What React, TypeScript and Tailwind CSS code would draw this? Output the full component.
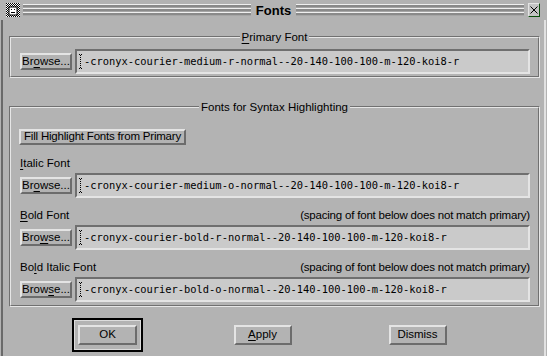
import type { ReactNode } from "react"

const ui = "font-['Liberation_Sans',Arial,sans-serif] text-[11.5px] text-black"
const raised =
  "border-2 border-t-[#e4e4e4] border-l-[#e4e4e4] border-b-[#6c6c6c] border-r-[#6c6c6c] bg-[#b3b3b3]"

function U({ children }: { children: ReactNode }) {
  return <span className="underline decoration-1 underline-offset-[2px]">{children}</span>
}

function Btn({ children, className = "" }: { children: ReactNode; className?: string }) {
  return (
    <button className={`${raised} ${ui} flex items-center justify-center leading-none whitespace-nowrap overflow-hidden ${className}`}>
      {children}
    </button>
  )
}

function Cursor() {
  return (
    <svg width="4" height="15" viewBox="0 0 4 15" className="ml-[2px] mr-[1px] shrink-0">
      <rect x="0" y="0" width="1" height="1" fill="#000" />
      <rect x="2" y="0" width="1" height="1" fill="#000" />
      {[1, 3, 5, 7, 9, 11, 13].map((y) => (
        <rect key={y} x="1" y={y} width="1" height="1" fill="#000" />
      ))}
      <rect x="0" y="14" width="1" height="1" fill="#000" />
      <rect x="2" y="14" width="1" height="1" fill="#000" />
    </svg>
  )
}

function Field({ value }: { value: string }) {
  return (
    <div className="flex-1 h-[25px] flex items-center bg-[#cacaca] border-2 border-t-[#6f6f6f] border-l-[#6f6f6f] border-b-[#e4e4e4] border-r-[#e4e4e4] overflow-hidden">
      <Cursor />
      <span className="font-['DejaVu_Sans_Mono','Liberation_Mono',monospace] text-[10.4px] whitespace-pre text-black">
        {value}
      </span>
    </div>
  )
}

function Group({ title, children, className = "" }: { title: ReactNode; children: ReactNode; className?: string }) {
  return (
    <div className={`relative ml-[6px] mr-[4px] border border-t-[#707070] border-l-[#707070] border-b-[#e6e6e6] border-r-[#e6e6e6] ${className}`}>
      <div className="border border-t-[#e6e6e6] border-l-[#e6e6e6] border-b-[#707070] border-r-[#707070] pl-[9px] pr-[8px]">
        {children}
      </div>
      <div className="absolute -top-[7px] left-0 right-0 flex justify-center">
        <span className={`${ui} bg-[#b3b3b3] px-[2px] leading-[14px]`}>{title}</span>
      </div>
    </div>
  )
}

function FontRow({ browse, value }: { browse: ReactNode; value: string }) {
  return (
    <div className="flex items-center gap-[3px]">
      <Btn className="w-[52px] h-[17px]">{browse}</Btn>
      <Field value={value} />
    </div>
  )
}

function Groove() {
  return (
    <div className="flex-1 h-[12px] bg-[repeating-linear-gradient(to_bottom,#f0f0f0_0px,#f0f0f0_1px,#8a8a8a_1px,#8a8a8a_3px,#a6a6a6_3px,#a6a6a6_4px)]" />
  )
}

function WinIcon() {
  return (
    <svg width="14" height="14" viewBox="0 0 14 14" className="shrink-0">
      <defs>
        <pattern id="dith" width="2" height="2" patternUnits="userSpaceOnUse">
          <rect width="2" height="2" fill="#fff" />
          <rect width="1" height="1" fill="#000" />
          <rect x="1" y="1" width="1" height="1" fill="#000" />
        </pattern>
      </defs>
      <rect width="14" height="14" fill="url(#dith)" />
      <rect x="3" y="4" width="8" height="8" fill="#fff" stroke="#000" strokeWidth="1" />
      <rect x="5" y="6" width="1" height="1" fill="#000" />
      <rect x="8" y="6" width="1" height="1" fill="#000" />
      <rect x="5" y="9" width="4" height="1" fill="#000" />
    </svg>
  )
}

function CloseBox() {
  return (
    <div className="ml-[4px] w-[12px] h-[14px] shrink-0 border border-t-[#e4e4e4] border-l-[#e4e4e4] border-b-[#0b4d0b] border-r-[#0b4d0b] bg-[#c4c4c4] flex items-center justify-center">
      <svg width="8" height="8" viewBox="0 0 8 8">
        <path d="M0.5 0.5 L7.5 7.5 M7.5 0.5 L0.5 7.5" stroke="#000" strokeWidth="1" />
      </svg>
    </div>
  )
}

export default function App() {
  return (
    <div className="w-[547px] h-[356px] bg-[#b3b3b3] flex flex-col overflow-hidden">
      <div className="h-[20px] flex items-center pl-[6px] pr-[7px] shrink-0">
        <WinIcon />
        <div className="ml-[3px] flex-1 flex items-center">
          <Groove />
          <span className="px-[5px] font-['Liberation_Sans_Narrow','Liberation_Sans',sans-serif] font-bold text-[13px] leading-none text-black">
            Fonts
          </span>
          <Groove />
        </div>
        <CloseBox />
      </div>

      <div className="flex-1 ml-[1px] mr-[1px] border-l-2 border-l-[#6a6a6a] border-r-2 border-r-[#e2e2e2] flex flex-col">
        <Group title={<><U>P</U>rimary Font</>} className="mt-[16px]">
          <div className="pt-[11px] pb-[2px]">
            <FontRow browse={<>Br<U>o</U>wse...</>} value="-cronyx-courier-medium-r-normal--20-140-100-100-m-120-koi8-r" />
          </div>
        </Group>

        <Group title="Fonts for Syntax Highlighting" className="mt-[28px]">
          <div className="pt-[21px] pb-[3px] flex flex-col">
            <Btn className="w-[167px] h-[16px] -ml-[1px] tracking-[-0.2px]">Fill Highlight Fonts from Primary</Btn>

            <div className={`${ui} mt-[11px] h-[14px] leading-[14px]`}>
              <U>I</U>talic Font
            </div>
            <div className="mt-[3px]">
              <FontRow browse={<>Br<U>o</U>wse...</>} value="-cronyx-courier-medium-o-normal--20-140-100-100-m-120-koi8-r" />
            </div>

            <div className={`${ui} mt-[10px] h-[14px] leading-[14px] flex justify-between`}>
              <span><U>B</U>old Font</span>
              <span className="tracking-[-0.2px]">(spacing of font below does not match primary)</span>
            </div>
            <div className="mt-[3px]">
              <FontRow browse={<>Bro<U>w</U>se...</>} value="-cronyx-courier-bold-r-normal--20-140-100-100-m-120-koi8-r" />
            </div>

            <div className={`${ui} mt-[10px] h-[14px] leading-[14px] flex justify-between`}>
              <span>Bo<U>l</U>d Italic Font</span>
              <span className="tracking-[-0.2px]">(spacing of font below does not match primary)</span>
            </div>
            <div className="mt-[3px]">
              <FontRow browse={<>Brow<U>s</U>e...</>} value="-cronyx-courier-bold-o-normal--20-140-100-100-m-120-koi8-r" />
            </div>
          </div>
        </Group>

        <div className="mt-[11px] ml-[27px] w-[465px] h-[34px] grid grid-cols-3 items-center justify-items-center">
          <div className="border-2 border-black">
            <div className="border border-[#dcdcdc] px-[3px] py-[4px]">
              <Btn className="w-[59px] h-[20px]">OK</Btn>
            </div>
          </div>
          <Btn className="w-[58px] h-[20px]"><U>A</U>pply</Btn>
          <Btn className="w-[58px] h-[20px]">Dismiss</Btn>
        </div>
      </div>
    </div>
  )
}
